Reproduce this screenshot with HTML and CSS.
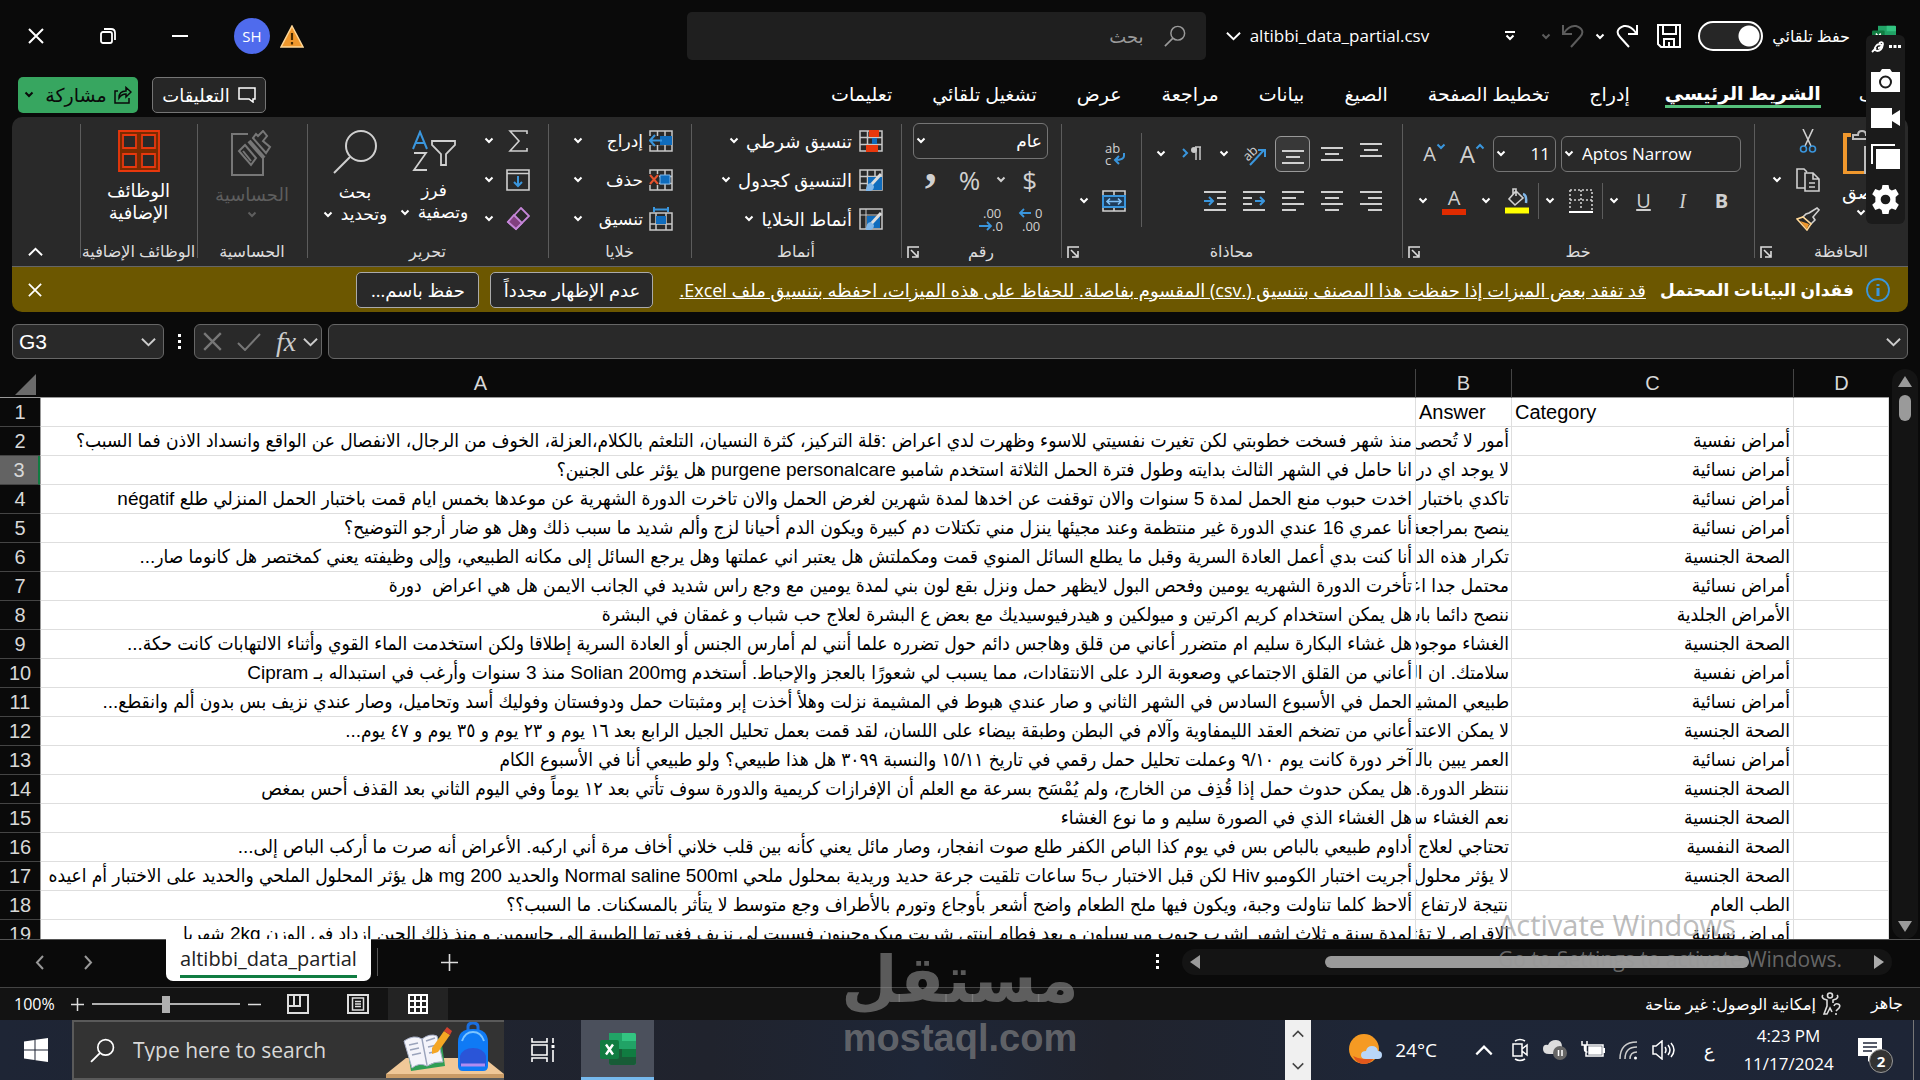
FILE: index.html
```html
<!DOCTYPE html>
<html lang="ar">
  <head>
    <meta charset="UTF-8" />
    <meta name="viewport" content="width=device-width, initial-scale=1.0" />
    <title>altibbi_data_partial.csv - Excel</title>
    <link rel="stylesheet" href="styles.css">
  </head>
  <body>
    <!-- shared symbols -->
    <svg class="defs" width="0" height="0">
      <symbol id="chev" viewBox="0 0 10 7"><path d="M1.5 1.5 5 5l3.500-3.500" fill="none" stroke="currentColor" stroke-width="2" /></symbol>
      <symbol id="chev-big" viewBox="0 0 16 10"><path d="M1 1.500 8 8.500l7-7" fill="none" stroke="currentColor" stroke-width="2" /></symbol>
      <symbol id="close" viewBox="0 0 16 16"><path d="M1 1l14 14M15 1 1 15" fill="none" stroke="currentColor" stroke-width="2" /></symbol>
      <symbol id="search" viewBox="0 0 24 24"><circle cx="15" cy="9" r="7.500" fill="none" stroke="currentColor" stroke-width="1.600" /><path d="M9.500 14.500 1 23" stroke="currentColor" stroke-width="1.800" /></symbol>
      <symbol id="launcher" viewBox="0 0 12 12"><path d="M1 12V1h11M4 4l6 6M11 5v6H5" fill="none" stroke="currentColor" stroke-width="1.600" /></symbol>
      <symbol id="excel" viewBox="0 0 36 34">
        <path d="M9 1h25q2 0 2 2v28q0 2-2 2H11q-2 0-2-2z" fill="#21a366" />
        <path d="M22 1h12q2 0 2 2v6H22z" fill="#33c481" /><path d="M9 17h13v16H11q-2 0-2-2z" fill="#185c37" /><path d="M22 17h14v8H22z" fill="#107c41" /><path d="M22 25h14v6q0 2-2 2H22z" fill="#185c37" />
        <rect y="8" width="19" height="19" rx="2" fill="#107c41" /><path d="M6 12.500l7 10M13 12.500l-7 10" stroke="#fff" stroke-width="2.400" />
      </symbol>
      <symbol id="table" viewBox="0 0 24 22"><path d="M1 1h22v20H1zM1 7.500h22M1 14.500h22M8.500 1v20M16 1v20" fill="none" stroke="#c8c8c8" stroke-width="1.500" /></symbol>
    </svg>

    <header class="titlebar" dir="rtl">
      <svg class="app-icon" viewBox="0 0 36 34"><use href="#excel" /></svg>
      <label class="autosave">حفظ تلقائي <input type="checkbox" role="switch" /></label>
      <div class="qat">
        <button aria-label="Save"><svg width="24" height="24" viewBox="0 0 24 24" fill="none" stroke="#fff" stroke-width="2"><path d="M1 1h22v22H4l-3-3zM6 1v9h13V1M7 23v-8h10v8M12 18v5" /></svg></button>
        <button aria-label="Redo"><svg width="22" height="24" viewBox="0 0 22 24" fill="none" stroke="#fff" stroke-width="2"><path d="M21 1v9h-9M20 9Q15 1 8 2C1 4 0 9 4 13l9 10" /></svg></button>
        <button aria-label="Redo list"><svg class="chev"><use href="#chev" /></svg></button>
        <button class="dim" aria-label="Undo"><svg width="22" height="24" viewBox="0 0 22 24" fill="none" stroke="#5c5c5c" stroke-width="2"><path d="M1 1v9h9M2 9Q7 1 14 2c7 2 8 7 4 11L9 23" /></svg></button>
        <button class="dim" aria-label="Undo list"><svg class="chev"><use href="#chev" /></svg></button>
        <button class="custom" aria-label="Customize"><svg width="12" height="10" viewBox="0 0 12 10" fill="none" stroke="#fff" stroke-width="2"><path d="M1 1h10M2.500 4.500 6 8l3.500-3.500" /></svg></button>
      </div>
      <button class="filename" dir="ltr"><svg width="15" height="10"><use href="#chev-big" /></svg>altibbi_data_partial.csv</button>
      <label class="search">
        <svg width="22" height="22"><use href="#search" /></svg>
        <input type="text" placeholder="بحث" aria-label="بحث" />
      </label>
      <div class="account">
        <svg width="24" height="23" viewBox="0 0 24 23"><path d="M12 1 23 22H1z" fill="#f0982d" stroke="#ffd796" stroke-width="1.500" /><path d="M12 8v7M12 17v2.500" stroke="#4b2c00" stroke-width="2.200" /></svg>
        <span class="avatar">SH</span>
      </div>
      <div class="window-buttons">
        <button aria-label="Minimize"><svg width="16" height="16" stroke="#fff" stroke-width="2"><path d="M0 8h16" /></svg></button>
        <button aria-label="Restore"><svg width="16" height="16" fill="none" stroke="#fff" stroke-width="1.800"><rect x="1" y="4" width="11" height="11" rx="2" /><path d="M4 1h7q4 0 4 4v7" /></svg></button>
        <button aria-label="Close"><svg width="16" height="16"><use href="#close" /></svg></button>
      </div>
    </header>

    <nav class="tabs" dir="rtl">
      <a href="#">ملف</a>
      <a href="#" class="active">الشريط الرئيسي</a>
      <a href="#">إدراج</a>
      <a href="#">تخطيط الصفحة</a>
      <a href="#">الصيغ</a>
      <a href="#">بيانات</a>
      <a href="#">مراجعة</a>
      <a href="#">عرض</a>
      <a href="#">تشغيل تلقائي</a>
      <a href="#">تعليمات</a>
      <button class="comments"><svg width="18" height="16" viewBox="0 0 18 16" fill="none" stroke="#fff" stroke-width="1.500"><path d="M1 1h16v11h-2v3l-4-3H1z" /></svg>التعليقات</button>
      <button class="share"><svg width="18" height="18" viewBox="0 0 18 18" fill="none" stroke="#0a0a0a" stroke-width="1.500"><path d="M4 5H1v12h14v-5M5 12c0-5 3-7 7-7V1.500L17 6l-5 5V8c-3 0-5 1-7 4z" /></svg>مشاركة<svg class="chev"><use href="#chev" /></svg></button>
    </nav>

    <section class="ribbon" dir="rtl">
      <div class="group clipboard">
        <div class="body">
          <button class="big"><svg width="48" height="44" viewBox="0 0 48 44" fill="none" stroke-width="2"><path d="M14 5H8v38h19M36 5h6v8" stroke="#f0982d" stroke-width="4" /><path d="M16 9V5h5q0-4 4-4t4 4h5v4zM28 17h14v26H28z" stroke="#bdbdbd" fill="#292929" /></svg><span>لصق</span><svg class="chev"><use href="#chev" /></svg></button>
          <div class="rows">
            <div class="row"><button aria-label="Cut"><svg width="24" height="24" viewBox="0 0 24 24" fill="none" stroke-width="1.600"><path d="M7 0l8 17M17 0 9 17" stroke="#d0d0d0" /><circle cx="7.500" cy="20" r="3" stroke="#3a96dd" /><circle cx="16.500" cy="20" r="3" stroke="#3a96dd" /></svg></button></div>
            <div class="row"><button aria-label="Copy"><svg width="24" height="24" viewBox="0 0 24 24" fill="none" stroke="#d0d0d0" stroke-width="1.600"><path d="M9 20H1V1h7l3 3M9 5h8l6 6v12H9zM17 5v6h6M13 15h6M13 19h6" /></svg></button><button aria-label="Copy options"><svg class="chev"><use href="#chev" /></svg></button></div>
            <div class="row"><button aria-label="Format painter"><svg width="24" height="24" viewBox="0 0 24 24" fill="none" stroke="#d0d0d0" stroke-width="1.600"><path d="M13 6l8-5 2 2-6 7 2 3-4 4-8-7 3-3z" /><path d="M7 10l8 7-4 6L1 12z" fill="#292929" stroke="#ffd796" /><path d="M4 14l9 3-2 5z" fill="#f0982d" stroke="none" /></svg></button></div>
          </div>
        </div>
        <div class="caption"><span>الحافظة</span><svg class="launcher"><use href="#launcher" /></svg></div>
      </div>

      <div class="group font">
        <div class="body two">
          <div class="row">
            <div class="combo name"><select dir="ltr" aria-label="Font"><option>Aptos Narrow</option></select><svg class="chev"><use href="#chev" /></svg></div>
            <div class="combo size"><select aria-label="Font size"><option>11</option></select><svg class="chev"><use href="#chev" /></svg></div>
            <button class="grow" aria-label="Increase font size">A<svg class="chev up"><use href="#chev" /></svg></button>
            <button class="shrink" aria-label="Decrease font size">A<svg class="chev"><use href="#chev" /></svg></button>
          </div>
          <div class="row">
            <button class="cell"><b>B</b></button>
            <button class="cell"><i>I</i></button>
            <button class="cell"><u>U</u></button>
            <button class="drop" aria-label="Underline options"><svg class="chev"><use href="#chev" /></svg></button>
            <span class="vline"></span>
            <button class="cell wide" aria-label="Borders"><svg width="24" height="24" viewBox="0 0 24 24" fill="none" stroke="#d0d0d0" stroke-width="1.600"><path d="M1 1h22v20M1 1v20M12 1v20M1 11h22" stroke-dasharray="2 2" /><path d="M0 23h24" stroke="#fff" stroke-width="2" /></svg></button>
            <button class="drop" aria-label="Border options"><svg class="chev"><use href="#chev" /></svg></button>
            <span class="vline"></span>
            <button class="cell wide" aria-label="Fill color"><svg width="24" height="26" viewBox="0 0 24 26" fill="none" stroke="#d0d0d0" stroke-width="1.600"><path d="M11 3l7 7-8 7-6-6zM11 8V1H8v5" /><path d="M18 6q4 1 3 9" stroke="#7fb6e8" stroke-width="2.500" /><path d="M0 22.500h24" stroke="#ff0" stroke-width="6" /></svg></button>
            <button class="drop" aria-label="Fill options"><svg class="chev"><use href="#chev" /></svg></button>
            <button class="cell wide font-color" aria-label="Font color">A</button>
            <button class="drop" aria-label="Font color options"><svg class="chev"><use href="#chev" /></svg></button>
          </div>
        </div>
        <div class="caption"><span>خط</span><svg class="launcher"><use href="#launcher" /></svg></div>
      </div>

      <div class="group align">
        <div class="body">
          <div class="two">
            <div class="row">
              <button class="cell" aria-label="Top align"><svg class="lines up4"><path d="M0 1h22M4 7h14M0 13h22" /></svg></button>
              <button class="cell" aria-label="Middle align"><svg class="lines"><path d="M0 1h22M4 7h14M0 13h22" /></svg></button>
              <button class="cell pressed" aria-label="Bottom align"><svg class="lines"><path d="M0 1h22M4 7h14M0 13h22" /></svg></button>
              <button class="cell" aria-label="Orientation"><svg width="24" height="24" viewBox="0 0 24 24" fill="none" stroke-width="1.600"><text x="1" y="16" transform="rotate(-45 8 12)">ab</text><path d="M8 23 22 8M16 8h7v7" stroke="#3a96dd" stroke-width="2" /></svg></button>
              <button class="drop" aria-label="Orientation options"><svg class="chev"><use href="#chev" /></svg></button>
              <button class="cell wide" aria-label="Text direction"><svg width="20" height="16" viewBox="0 0 20 16" fill="none" stroke-width="2"><path d="M1 3l4 4-4 4" stroke="#3a96dd" /><path d="M19 1h-6M14 1v13M18 1v13" stroke="#c8c8c8" stroke-width="1.500" /><circle cx="12" cy="4" r="3" fill="#c8c8c8" /></svg></button>
              <button class="drop" aria-label="Direction options"><svg class="chev"><use href="#chev" /></svg></button>
            </div>
            <div class="row">
              <button class="cell" aria-label="Align right"><svg class="lines tall"><path d="M0 1h22M8 7h14M0 13h22M8 19h14" /></svg></button>
              <button class="cell" aria-label="Center"><svg class="lines tall"><path d="M0 1h22M4 7h14M0 13h22M4 19h14" /></svg></button>
              <button class="cell" aria-label="Align left"><svg class="lines tall"><path d="M0 1h22M0 7h14M0 13h22M0 19h14" /></svg></button>
              <button class="cell" aria-label="Decrease indent"><svg class="lines tall"><path d="M0 1h22M0 7h9M0 13h9M0 19h22" /><path class="blue" d="M12 10h9M17 6l4 4-4 4" /></svg></button>
              <button class="cell" aria-label="Increase indent"><svg class="lines tall"><path d="M0 1h22M13 7h9M13 13h9M0 19h22" /><path class="blue" d="M0 10h9M5 6l4 4-4 4" /></svg></button>
            </div>
          </div>
          <span class="vline long"></span>
          <div class="two">
            <div class="row"><button class="cell" aria-label="Wrap text"><svg width="24" height="26" viewBox="0 0 24 26" fill="none"><text x="3" y="12">ab</text><text x="3" y="24">c</text><path d="M22 12v3q0 4-9 4M17 15l-4 4 4 4" stroke="#3a96dd" stroke-width="2" /></svg></button></div>
            <div class="row"><button class="cell" aria-label="Merge"><svg width="24" height="22" viewBox="0 0 24 22" fill="none" stroke-width="1.600"><path d="M1 1h22v20H1zM12 1v20" stroke="#d0d0d0" /><path d="M1 6h22v11H1z" fill="#1e3c5a" stroke="#3a96dd" stroke-width="2" /><path d="M5 11.500h14M8 8.500l-3 3 3 3M16 8.500l3 3-3 3" stroke="#7fc0f5" /></svg></button><button class="drop" aria-label="Merge options"><svg class="chev"><use href="#chev" /></svg></button></div>
          </div>
        </div>
        <div class="caption"><span>محاذاة</span><svg class="launcher"><use href="#launcher" /></svg></div>
      </div>

      <div class="group number">
        <div class="body rows">
          <div class="row"><div class="combo format"><select aria-label="Number format"><option>عام</option></select><svg class="chev"><use href="#chev" /></svg></div></div>
          <div class="row signs"><button>$</button><button aria-label="Currency options"><svg class="chev"><use href="#chev" /></svg></button><button>%</button><button class="comma" aria-label="Comma style">,</button></div>
          <div class="row decimals">
            <button aria-label="Increase decimal"><svg width="26" height="26" viewBox="0 0 26 26" fill="none"><text x="17" y="12">0</text><text x="4" y="25">.00</text><path d="M2 7h11M6 3 2 7l4 4" stroke="#3a96dd" stroke-width="1.800" /></svg></button>
            <button aria-label="Decrease decimal"><svg width="26" height="26" viewBox="0 0 26 26" fill="none"><text x="4" y="12">.00</text><text x="13" y="25">.0</text><path d="M0 20h12M8 16l4 4-4 4" stroke="#3a96dd" stroke-width="1.800" /></svg></button>
          </div>
        </div>
        <div class="caption"><span>رقم</span><svg class="launcher"><use href="#launcher" /></svg></div>
      </div>

      <div class="group styles">
        <div class="body rows">
          <button class="row item"><svg width="24" height="22" viewBox="0 0 24 22"><use href="#table" /><path d="M10 0h10v7H10zM7 15h12v7H7z" fill="#e8380d" /><path d="M13 8h5v6h-5z" fill="#0f6cbd" /></svg>تنسيق شرطي<svg class="chev"><use href="#chev" /></svg></button>
          <button class="row item"><svg width="24" height="22" viewBox="0 0 24 22"><use href="#table" /><path d="M9 8h14v13H9z" fill="#0f6cbd" /><path d="M22 5 12 16" stroke="#ddd" stroke-width="3" /><path d="M12 14q-5 0-5 8 8 1 8-5z" fill="#7fb6e8" /></svg>التنسيق كجدول<svg class="chev"><use href="#chev" /></svg></button>
          <button class="row item"><svg width="24" height="22" viewBox="0 0 24 22"><path d="M1 1h22v20H1z" fill="none" stroke="#c8c8c8" stroke-width="1.500" /><path d="M1 7h22M7 1v20" stroke="#c8c8c8" /><path d="M8 8h13v12H8z" fill="#0f6cbd" /><path d="M22 5 12 16" stroke="#ddd" stroke-width="3" /><path d="M12 14q-5 0-5 8 8 1 8-5z" fill="#7fb6e8" /></svg>أنماط الخلايا<svg class="chev"><use href="#chev" /></svg></button>
        </div>
        <div class="caption"><span>أنماط</span></div>
      </div>

      <div class="group cells">
        <div class="body rows">
          <button class="row item"><svg width="24" height="22" viewBox="0 0 24 22"><use href="#table" /><path d="M10 6h13v9H10z" fill="#0f6cbd" /><path d="M0 6h11v9H0z" fill="#292929" /><path d="M1 10.500h12M6 5l-5 5.500L6 16" fill="none" stroke="#3a96dd" stroke-width="2" /></svg><span>إدراج</span><svg class="chev"><use href="#chev" /></svg></button>
          <button class="row item"><svg width="24" height="22" viewBox="0 0 24 22"><use href="#table" /><path d="M0 5h10v11H0z" fill="#292929" /><path d="M11 6h10v9H11z" fill="#0f6cbd" stroke="#7fb6e8" /><path d="M1 6l8 9M9 6l-8 9" stroke="#e8532d" stroke-width="2" /></svg><span>حذف</span><svg class="chev"><use href="#chev" /></svg></button>
          <button class="row item"><svg width="24" height="24" viewBox="0 0 24 24"><path d="M1 6h22v17H1zM1 17h22M7 6v17M17 6v17" fill="none" stroke="#c8c8c8" stroke-width="1.500" /><path d="M7 9h10v8H7z" fill="#0f6cbd" /><path d="M5 0v5M19 0v5M5 2.500h14" stroke="#3a96dd" stroke-width="2" /></svg><span>تنسيق</span><svg class="chev"><use href="#chev" /></svg></button>
        </div>
        <div class="caption"><span>خلايا</span></div>
      </div>

      <div class="group editing">
        <div class="body">
          <div class="rows">
            <div class="row"><button aria-label="Sum"><svg width="24" height="22" viewBox="0 0 24 22" fill="none" stroke="#d0d0d0" stroke-width="1.600"><path d="M21 4V1H4l9 10-9 10h17v-3" /></svg></button><button aria-label="Sum options"><svg class="chev"><use href="#chev" /></svg></button></div>
            <div class="row"><button aria-label="Fill"><svg width="24" height="22" viewBox="0 0 24 22" fill="none" stroke="#d0d0d0" stroke-width="1.600"><path d="M1 1h22v20H1zM1 4.500h22" /><path d="M12 7v10M8 13l4 4 4-4" stroke="#3a96dd" stroke-width="2" /></svg></button><button aria-label="Fill options"><svg class="chev"><use href="#chev" /></svg></button></div>
            <div class="row"><button aria-label="Clear"><svg width="24" height="24" viewBox="0 0 24 24" fill="none" stroke="#c586d8" stroke-width="1.800"><path d="M15 1l8 8L10 22l-8-7z" /><path d="M8 8l8 8-6 6-8-7z" fill="#81407f" /></svg></button><button aria-label="Clear options"><svg class="chev"><use href="#chev" /></svg></button></div>
          </div>
          <button class="big"><svg width="44" height="42" viewBox="0 0 44 42" fill="none" stroke="#d0d0d0" stroke-width="1.800"><path d="M1 19 8 2l7 17M4 13h8" stroke="#3a96dd" stroke-width="2" /><path d="M2 23h12L2 40h13M20 11h23v4l-9 9v11h-5V24l-9-9z" /></svg><span>فرز</span><span>وتصفية<svg class="chev"><use href="#chev" /></svg></span></button>
          <button class="big"><svg width="44" height="44" viewBox="0 0 44 44" fill="none" stroke="#d0d0d0" stroke-width="2"><circle cx="28" cy="16" r="15" /><path d="M17 27 1 43" /></svg><span>بحث</span><span>وتحديد<svg class="chev"><use href="#chev" /></svg></span></button>
        </div>
        <div class="caption"><span>تحرير</span></div>
      </div>

      <div class="group single">
        <div class="body">
          <button class="big" disabled><svg width="42" height="46" viewBox="0 0 42 46" fill="none" stroke="#777" stroke-width="2"><path d="M17 4H1v41h31V27" /><path d="M14 15l11 13-5 7L8 21z" /><path d="M12 21l8 10" /><path d="M18 11l15 17" stroke-width="4" /><path d="M22 8l13 15 4-6-7-6 4-5-4-5-5 5-2-2z" /></svg><span>الحساسية</span><svg class="chev"><use href="#chev" /></svg></button>
        </div>
        <div class="caption"><span>الحساسية</span></div>
      </div>

      <div class="group single">
        <div class="body">
          <button class="big"><svg width="42" height="42" viewBox="0 0 42 42" fill="none"><path d="M2 2h38v38H2zM21 2v38M2 21h38" stroke="#7a2b00" stroke-width="4" /><path d="M1 1h40v40H1zM5 5h13v13H5zM24 5h13v13H24zM5 24h13v13H5zM24 24h13v13H24z" stroke="#e8380d" stroke-width="1.800" /></svg><span>الوظائف</span><span>الإضافية</span></button>
        </div>
        <div class="caption"><span>الوظائف الإضافية</span></div>
      </div>

      <div class="group collapse">
        <button aria-label="Collapse ribbon"><svg class="up" width="15" height="10"><use href="#chev-big" /></svg></button>
      </div>
    </section>

    <section class="message" dir="rtl">
      <svg width="24" height="24" viewBox="0 0 24 24" fill="none" stroke="#3a96dd" stroke-width="1.800"><circle cx="12" cy="12" r="11" /><path d="M12 6v2M12 10v8" stroke-width="3" /></svg>
      <strong>فقدان البيانات المحتمل</strong>
      <a href="#">قد تفقد بعض الميزات إذا حفظت هذا المصنف بتنسيق (<bdi dir="rtl">.csv</bdi>) المقسوم بفاصلة. للحفاظ على هذه الميزات، احفظه بتنسيق ملف Excel.</a>
      <button class="again">عدم الإظهار مجدداً</button>
      <button class="saveas">حفظ باسم...</button>
      <button class="dismiss" aria-label="Close message"><svg width="14" height="14"><use href="#close" /></svg></button>
    </section>

    <section class="formula">
      <div class="namebox"><input type="text" value="G3" aria-label="Name box" /><svg width="15" height="10"><use href="#chev-big" /></svg></div>
      <span class="dots"></span>
      <div class="fx">
        <svg width="19" height="19" class="off"><use href="#close" /></svg>
        <svg width="24" height="18" viewBox="0 0 24 18" fill="none" stroke="#777" stroke-width="2"><path d="M1 10l7 7L23 1" /></svg>
        <i>fx</i>
        <svg width="15" height="10"><use href="#chev-big" /></svg>
      </div>
      <div class="entry"><input type="text" aria-label="Formula bar" /><svg width="15" height="10"><use href="#chev-big" /></svg></div>
    </section>

    <main class="sheet">
      <div class="grid">
        <table>
          <colgroup><col class="n"><col class="a"><col class="b"><col class="c"><col class="d"></colgroup>
          <thead>
            <tr><th class="corner"><svg width="21" height="21"><path d="M21 0v21H0z" fill="#6b6b6b" /></svg></th><th class="head-a">A</th><th>B</th><th>C</th><th>D</th></tr>
          </thead>
          <tbody>
            <tr><th>1</th><td></td><td class="ltr">Answer</td><td class="ltr">Category</td><td></td></tr>
            <tr><th>2</th><td>منذ شهر فسخت خطوبتي لكن تغيرت نفسيتي للاسوء وظهرت لدي اعراض :قلة التركيز، كثرة النسيان، التلعثم بالكلام،العزلة، الخوف من الرجال، الانفصال عن الواقع وانسداد الاذن فما السبب؟</td><td>أمور لا تُحصى</td><td>أمراض نفسية</td><td></td></tr>
            <tr class="selected"><th>3</th><td>انا حامل في الشهر الثالث بدايته وطول فترة الحمل الثلاثة استخدم شامبو purgene personalcare هل يؤثر على الجنين؟</td><td>لا يوجد اي دراسة</td><td>أمراض نسائية</td><td></td></tr>
            <tr><th>4</th><td>اخدت حبوب منع الحمل لمدة 5 سنوات والان توقفت عن اخدها لمدة شهرين لغرض الحمل والان تاخرت الدورة الشهرية عن موعدها بخمس ايام قمت باختبار الحمل المنزلي طلع négatif</td><td>تاكدي باختبار</td><td>أمراض نسائية</td><td></td></tr>
            <tr><th>5</th><td>أنا عمري 16 عندي الدورة غير منتظمة وعند مجيئها ينزل مني تكتلات دم كبيرة ويكون الدم أحيانا لزج وألم شديد ما سبب ذلك وهل هو ضار أرجو التوضيح؟</td><td>ينصح بمراجعة</td><td>أمراض نسائية</td><td></td></tr>
            <tr><th>6</th><td>أنا كنت بدي أعمل العادة السرية وقبل ما يطلع السائل المنوي قمت ومكملتش هل يعتبر اني عملتها وهل يرجع السائل إلى مكانه الطبيعي، وإلى وظيفته يعني كمختصر هل كانوما صار...</td><td>تكرار هذه الدورة</td><td>الصحة الجنسية</td><td></td></tr>
            <tr><th>7</th><td>تأخرت الدورة الشهريه يومين وفحص البول لايظهر حمل ونزل بقع لون بني لمدة يومين مع وجع راس شديد في الجانب الايمن هل هي اعراض&nbsp; دورة</td><td>محتمل جدا اعراض</td><td>أمراض نسائية</td><td></td></tr>
            <tr><th>8</th><td>هل يمكن استخدام كريم اكرتين و ميولكين و هيدرفيوسيديك مع بعض ع البشرة لعلاج حب شباب و غمقان في البشرة</td><td>ننصح دائما باستشارة</td><td>الأمراض الجلدية</td><td></td></tr>
            <tr><th>9</th><td>هل غشاء البكارة سليم ام متضرر أعاني من قلق وهاجس دائم حول تضرره علما أنني لم أمارس الجنس أو العادة السرية إطلاقا ولكن استخدمت الماء القوي وأثناء الالتهابات كانت حكة...</td><td>الغشاء موجود</td><td>الصحة الجنسية</td><td></td></tr>
            <tr><th>10</th><td>أعاني من القلق الاجتماعي وصعوبة الرد على الانتقادات، مما يسبب لي شعورًا بالعجز والإحباط. أستخدم Solian 200mg منذ 3 سنوات وأرغب في استبداله بـ Cipram</td><td>سلامتك. ان القلق</td><td>أمراض نفسية</td><td></td></tr>
            <tr><th>11</th><td>الحمل في الأسبوع السادس في الشهر الثاني و صار عندي هبوط في المشيمة نزلت وهلأ أخذت إبر ومثبتات حمل ودوفستان وفوليك أسد وتحاميل، وصار عندي نزيف بس بدون ألم وانقطع...</td><td>طبيعي المشيمة</td><td>أمراض نسائية</td><td></td></tr>
            <tr><th>12</th><td>أعاني من تضخم العقد الليمفاوية وآلام في البطن وطبقة بيضاء على اللسان، لقد قمت بعمل تحليل الجيل الرابع بعد ١٦ يوم و ٢٣ يوم و ٣٥ يوم و ٤٧ يوم...</td><td>لا يمكن الاعتماد</td><td>الصحة الجنسية</td><td></td></tr>
            <tr><th>13</th><td>آخر دورة كانت يوم ٩/١٠ وعملت تحليل حمل رقمي في تاريخ ١٥/١١ والنسبة ٣٠٩٩ هل هذا طبيعي؟ ولو طبيعي أنا في الأسبوع الكام</td><td>العمر يبين بالسونار</td><td>أمراض نسائية</td><td></td></tr>
            <tr><th>14</th><td>هل يمكن حدوث حمل إذا قُذِف من الخارج، ولم يُمْسَح بسرعة مع العلم أن الإفرازات كريمية والدورة سوف تأتي بعد ١٢ يوماً وفي اليوم الثاني بعد القذف أحس بمغص</td><td>ننتظر الدورة.</td><td>الصحة الجنسية</td><td></td></tr>
            <tr><th>15</th><td>هل الغشاء الذي في الصورة سليم و ما نوع الغشاء</td><td>نعم الغشاء سليم</td><td>الصحة الجنسية</td><td></td></tr>
            <tr><th>16</th><td>أداوم طبيعي بالباص بس في يوم كذا الباص الكفر طلع صوت انفجار، وصار مائل يعني كأنه بين قلب خلاني أخاف مرة أني اركبه. الأعراض أنه صرت ما أركب الباص إلى...</td><td>تحتاجي لعلاج</td><td>الصحة النفسية</td><td></td></tr>
            <tr><th>17</th><td>أجريت اختبار الكومبو Hiv لكن قبل الاختبار ب5 ساعات تلقيت جرعة حديد وريدية بمحلول ملحي Normal saline 500ml والحديد 200 mg هل يؤثر المحلول الملحي والحديد على الاختبار أم اعيده</td><td>لا يؤثر محلول</td><td>الصحة الجنسية</td><td></td></tr>
            <tr><th>18</th><td>ألاحظ كلما تناولت وجبة، ويكون فيها ملح الطعام واضح أشعر بأوجاع وتورم بالأطراف وجع متوسط لا يتأثر بالمسكنات. ما السبب؟؟</td><td>نتيجة لارتفاع</td><td>الطب العام</td><td></td></tr>
            <tr><th>19</th><td>لمدة سنة و ثلاث اشهر اشرب حبوب ميرسيلون و بعد فطام ابنتي شربت ميكروجينون فسببت لي نزيف فغيرتها الطبيبة الى جاسمين و منذ ذلك الحين ازداد في الوزن 2kg شهريا</td><td>الاقراص لا تؤثر</td><td>أمراض نسائية</td><td></td></tr>
          </tbody>
        </table>
      </div>
      <div class="vscroll">
        <svg width="14" height="11"><path d="M7 0l7 11H0z" fill="#9a9a9a" /></svg>
        <span class="thumb"></span>
        <svg class="down" width="14" height="11"><path d="M0 0h14L7 11z" fill="#9a9a9a" /></svg>
      </div>
    </main>

    <section class="sheetbar">
      <button class="prev" aria-label="Previous sheet"><svg width="9" height="15" viewBox="0 0 9 15" fill="none" stroke="#999" stroke-width="2"><path d="M8 1 2 7.500 8 14" /></svg></button>
      <button class="next" aria-label="Next sheet"><svg width="9" height="15" viewBox="0 0 9 15" fill="none" stroke="#999" stroke-width="2"><path d="M1 1l6 6.500L1 14" /></svg></button>
      <button class="sheet-tab"><span>altibbi_data_partial</span></button>
      <button class="add" aria-label="New sheet"><svg width="17" height="17" stroke="#ddd" stroke-width="1.600"><path d="M8.500 0v17M0 8.500h17" /></svg></button>
      <span class="dots"></span>
      <div class="hscroll">
        <svg width="10" height="14"><path d="M10 0v14L0 7z" fill="#9a9a9a" /></svg>
        <div class="track"><span class="thumb"></span></div>
        <svg width="10" height="14"><path d="M0 0v14l10-7z" fill="#ababab" /></svg>
      </div>
    </section>

    <footer class="status">
      <span class="percent">100%</span>
      <svg width="13" height="13" stroke="#ddd" stroke-width="1.500"><path d="M6.500 0v13M0 6.500h13" /></svg>
      <input type="range" min="10" max="190" value="100" aria-label="Zoom" />
      <svg width="13" height="13" stroke="#ddd" stroke-width="1.500"><path d="M0 6.500h13" /></svg>
      <div class="views">
        <button aria-label="Page break preview"><svg width="22" height="20" viewBox="0 0 22 20" fill="none" stroke="#ddd" stroke-width="2"><path d="M1 1h20v18H1zM1 12h12V1M7 1v11" /></svg></button>
        <button aria-label="Page layout"><svg width="22" height="20" viewBox="0 0 22 20" fill="none" stroke="#ddd" stroke-width="2"><path d="M1 1h20v18H1z" /><path d="M5.500 4h11v12h-11zM8 7.500h6M8 10h6M8 12.500h6" stroke-width="1.500" /></svg></button>
        <button class="on" aria-label="Normal"><svg width="20" height="20" viewBox="0 0 20 20" fill="none" stroke="#fff" stroke-width="2"><path d="M1 1h18v18H1zM1 7h18M1 13h18M7 1v18M13 1v18" /></svg></button>
      </div>
      <div class="access" dir="rtl">
        <span>جاهز</span>
        <button><svg width="21" height="24" viewBox="0 0 21 24" fill="none" stroke="#ddd" stroke-width="1.600"><circle cx="9" cy="3.500" r="2.500" /><path d="M2 3q-2 2 1 4l3 1v6L3 22h3l3-6 2 4M16 3q2 2-1 4l-3 1v3M13 14q1-3 4-2 3 1 1 4l-3 3M15 21v2" /></svg>إمكانية الوصول: غير متاحة</button>
      </div>
    </footer>

    <footer class="taskbar">
      <button class="start" aria-label="Start"><svg width="24" height="24" fill="#fff"><path d="M0 3.500 10.500 2v9.500H0zM11.500 1.800 24 0v11.500H11.500zM0 12.500h10.500V22L0 20.500zM11.500 12.500H24V24l-12.500-1.800z" /></svg></button>
      <label class="task-search">
        <svg width="25" height="25"><use href="#search" /></svg>
        <input type="text" placeholder="Type here to search" aria-label="Search Windows" />
        <svg width="118" height="56" viewBox="0 0 118 56">
          <path d="M20 36h78l20 16v4H0v-4z" fill="#f0c898" /><path d="M0 52h118v4H0z" fill="#c99b66" />
          <path d="M20 20l35-4 4 28-34 5z" fill="#2f9e54" /><path d="M18 19q10-7 18-2 8-6 15-3l6 26q-8-1-16 4-8-4-15 2z" fill="#f4f4fa" stroke="#a8b0c8" /><path d="M36 17l5 26M23 23l9-2M24 28l9-2M26 33l9-2M40 19l9-3M42 25l9-2M43 31l9-2" stroke="#9aa3bb" stroke-width="1.400" />
          <path d="M46 26 58 9l6 4-12 17-6 2z" fill="#f5a623" /><path d="M58 9l3-4 5 4-2 4z" fill="#d3412e" />
          <path d="M82 10V5q0-4 5-4t5 4v5" fill="none" stroke="#1a6fe0" stroke-width="3" /><path d="M72 44V20Q72 7 87 7t15 13v24q0 5-5 5H77q-5 0-5-5z" fill="#0f7af5" /><path d="M76 19q3-9 11-9t11 9" fill="none" stroke="#7cc4ff" stroke-width="2" /><path d="M74 44V34q3-8 13-8t13 8v10z" fill="#2a55d8" /><path d="M75 43h24" stroke="#b08cf0" stroke-width="3" />
        </svg>
      </label>
      <button class="taskview" aria-label="Task view"><svg width="24" height="24" viewBox="0 0 24 24" fill="none" stroke="#fff" stroke-width="1.600"><path d="M1 0v4h15V0M1 7h15v10H1zM1 24v-4h15v4M22 0v5M22 12v12" /><path d="M22 7v3" stroke-width="3" /></svg></button>
      <button class="excel-task" aria-label="Excel"><svg width="36" height="34"><use href="#excel" /></svg></button>
      <div class="pager"><svg class="up" width="12" height="8"><use href="#chev-big" /></svg><svg width="12" height="8"><use href="#chev-big" /></svg></div>
      <div class="weather"><svg width="34" height="32" viewBox="0 0 34 32"><circle cx="15" cy="15" r="15" fill="#f59a23" /><path d="M4 22q11 6 22 0-4 8-11 8T4 22z" fill="#e2571c" /><path d="M17 25q-5 0-5-4t5-4q1-5 6-5t6 5q4 0 4 4t-4 4z" fill="#b9d6f7" /></svg>24°C</div>
      <div class="tray">
        <svg class="up" width="18" height="11"><use href="#chev-big" /></svg>
        <svg width="18" height="24" viewBox="0 0 18 24" fill="none" stroke="#fff" stroke-width="1.500"><path d="M4 3q5-3 10 0M4 21q5 3 10 0M2 6h9v12H2zM11 11l5-4v10l-5-4" /></svg>
        <svg width="24" height="20" viewBox="0 0 24 20"><path d="M6 14q-6 0-6-5t5-4q2-5 8-5t6 7v7z" fill="#ddd" /><circle cx="17" cy="13" r="7" fill="#666" /><path d="M15.500 10v6M19 10v6" stroke="#fff" stroke-width="1.500" /></svg>
        <svg width="24" height="18" viewBox="0 0 24 18" fill="none" stroke="#fff" stroke-width="1.500"><path d="M5 4h17v11H5zM1 0v4h5V0M3.500 4v4q0 3 3 3" /><path d="M8 6h12v7H8z" fill="#fff" /><path d="M23 7v5" stroke-width="2" /></svg>
        <svg width="19" height="19" viewBox="0 0 19 19" fill="none" stroke="#ccc" stroke-width="1.500"><path d="M1 18Q1 1 18 1M6 18Q6 6 18 6M11 18q0-7 7-7" /><circle cx="16.500" cy="17" r="1.500" fill="#fff" stroke="none" /></svg>
        <svg width="24" height="20" viewBox="0 0 24 20" fill="none" stroke="#fff" stroke-width="1.500"><path d="M1 6v8h3l6 5V1L4 6zM13 7q2 3 0 6M16 5q4 5 0 10M19 3q6 7 0 14" /></svg>
      </div>
      <span class="lang">ع</span>
      <div class="clock"><span>4:23 PM</span><span>11/17/2024</span></div>
      <button class="notify" aria-label="2 notifications"><svg width="24" height="24" viewBox="0 0 24 24"><path d="M0 0h24v18h-9l-5 6v-6H0z" fill="#fff" /><path d="M5 5h14M5 9h14M5 13h9" stroke="#20273a" stroke-width="1.400" /></svg><span class="badge">2</span></button>
      <button class="desktop" aria-label="Show desktop"></button>
    </footer>

    <aside class="capture">
      <svg width="30" height="12" viewBox="0 0 30 12" fill="none" stroke="#fff" stroke-width="1.800"><path d="M1 11l4-4M8 2q4-2 4 1-1 7-6 7-4-1-1-5 2-3 6-1-1 3-4 3" /><path d="M18 5.500h3M22.500 5.500h3M27 5.500h3" stroke-width="3" /></svg>
      <button aria-label="Screenshot"><svg width="29" height="23" fill="#fff"><path d="M0 3h9l2-3h8l2 3h8v20H0z" /><circle cx="14.500" cy="13" r="5.500" stroke="#1b1b1b" stroke-width="2" /></svg></button>
      <button aria-label="Record"><svg width="29" height="20" fill="#fff"><path d="M0 0h21v7l8-5v16l-8-5v7H0z" /></svg></button>
      <button aria-label="Gallery"><svg width="29" height="25" fill="#fff"><path d="M5 5h24v20H5zM0 0h24v2H2v18H0z" /></svg></button>
      <button aria-label="Settings"><svg width="29" height="29" viewBox="0 0 24 24" fill="#fff"><path fill-rule="evenodd" d="M9.500 0h5l.7 3.400 2 1.100L20.500 3.400l2.500 4.300-2.600 2.300v4l2.600 2.300-2.500 4.300-3.300-1.100-2 1.100-.7 3.400h-5l-.7-3.400-2-1.100-3.300 1.100L1 16.300 3.600 14v-4L1 7.700l2.500-4.300 3.300 1.100 2-1.100zM12 8a4 4 0 1 0 0 8 4 4 0 0 0 0-8z" /></svg></button>
    </aside>

    <div class="activate">
      <span>Activate Windows</span>
      <small>Go to Settings to activate Windows.</small>
    </div>

    <div class="brand">
      <span class="brand-ar">مستقل</span>
      <span class="brand-en">mostaql.com</span>
    </div>
  </body>
</html>
```
FILE: styles.css
```css
* {
  box-sizing: border-box;
}
body {
  margin: 0;
  height: 100vh;
  display: flex;
  flex-direction: column;
  overflow: hidden;
  position: relative;
  background-color: #0a0a0a;
  color: #fff;
  font-family: "Open Sans", "DejaVu Sans", sans-serif;
  font-size: 18px;
  line-height: 22px;
}
button,
input,
select {
  font: inherit;
  color: inherit;
  background: none;
  border: none;
  padding: 0;
  margin: 0;
  outline: none;
}
button {
  display: inline-flex;
  align-items: center;
  justify-content: center;
  white-space: nowrap;
}
a {
  color: inherit;
  text-decoration: none;
}
svg {
  display: block;
  flex: none;
}
.defs {
  position: absolute;
}
.chev {
  width: 10px;
  height: 7px;
}
.up {
  transform: rotate(180deg);
}

/* Title bar */
.titlebar {
  flex: none;
  height: 72px;
  display: flex;
  align-items: center;
  padding: 0 24px;
  font-size: 17px;
}
.app-icon {
  width: 24px;
  height: 23px;
}
.autosave {
  display: flex;
  align-items: center;
  gap: 9px;
  margin-right: 22px;
  font-size: 16px;
}
.autosave input {
  appearance: none;
  width: 65px;
  height: 30px;
  border: 2px solid #fff;
  border-radius: 15px;
  background: radial-gradient(circle at 49px 13px, #fff 10px, #262626 11px);
}
.qat {
  display: flex;
  align-items: center;
  gap: 11px;
  margin-right: 17px;
}
.qat button:first-child {
  margin-left: 8px;
}
.qat .dim {
  color: #5c5c5c;
}
.qat .custom {
  margin-right: 14px;
}
.filename {
  margin-right: 75px;
  gap: 9px;
}
.search {
  flex: none;
  width: 27vw;
  height: 48px;
  margin-right: 20px;
  padding-right: 20px;
  display: flex;
  align-items: center;
  gap: 20px;
  background-color: #1f1f1f;
  border-radius: 5px;
  color: #9a9a9a;
}
.search input {
  flex: 1;
  min-width: 0;
  font-size: 18px;
}
.search input::placeholder {
  color: #9a9a9a;
}
.account {
  display: flex;
  align-items: center;
  gap: 10px;
  margin-right: auto;
}
.avatar {
  width: 36px;
  height: 36px;
  border-radius: 50%;
  background-color: #4f6bed;
  font-size: 15px;
  line-height: 36px;
  text-align: center;
}
.window-buttons {
  display: flex;
  gap: 56px;
  margin-right: 46px;
  padding-left: 4px;
}

/* Ribbon tabs */
.tabs {
  flex: none;
  height: 45px;
  display: flex;
  align-items: center;
  gap: 40px;
  padding: 0 20px 0 18px;
  font-size: 19px;
}
.tabs a {
  white-space: nowrap;
  padding-bottom: 2px;
}
.tabs a:first-child {
  margin-right: 5px;
}
.tabs .active {
  font-weight: bold;
  border-bottom: 3px solid #56c17c;
  padding-bottom: 1px;
  margin: 0 -2px 0 -5px;
}
.comments,
.share {
  height: 36px;
  border-radius: 5px;
  font-size: 18px;
}
.comments {
  width: 114px;
  gap: 8px;
  margin-right: auto;
  background-color: #262626;
  border: 1px solid #757575;
}
.share {
  width: 120px;
  gap: 7px;
  margin-right: -26px;
  background-color: #37a660;
  color: #0a0a0a;
  font-size: 19px;
}
.share .chev {
  margin-right: 4px;
}

/* Ribbon */
.ribbon {
  flex: none;
  height: 150px;
  margin: 0 12px;
  display: grid;
  grid-template-columns: 154fr 352fr 341fr 160fr 210fr 143fr 241fr 110fr 117fr 68fr;
  background-color: #292929;
  border-radius: 10px 10px 0 0;
  border-bottom: 1px solid #666;
}
.group {
  position: relative;
  display: grid;
  grid-template-rows: 117px 26px;
  padding-top: 4px;
  min-width: 0;
  font-size: 17px;
}
.group::after {
  content: "";
  position: absolute;
  left: 0;
  top: 7px;
  bottom: 8px;
  width: 1px;
  background-color: #5c5c5c;
}
.group:last-child::after {
  display: none;
}
.body {
  display: flex;
}
.body.rows,
.rows,
.two {
  display: flex;
  flex-direction: column;
}
.two {
  padding-top: 9px;
}
.row {
  display: flex;
  align-items: center;
  justify-content: flex-start;
  height: 39px;
}
.two .row {
  height: 47px;
}
.caption {
  position: relative;
  display: flex;
  align-items: center;
  justify-content: center;
  font-size: 16px;
  color: #ddd;
  white-space: nowrap;
}
.launcher {
  position: absolute;
  left: 6px;
  top: 8px;
  width: 12px;
  height: 12px;
}
.big {
  flex-direction: column;
  justify-content: flex-start;
  padding-top: 9px;
  width: 74px;
}
.big > svg:first-child {
  margin-bottom: 7px;
}
.big span {
  display: flex;
  align-items: center;
  gap: 8px;
}
.big > .chev {
  margin-top: 6px;
}
.big:disabled {
  color: #5e5e5e;
}
.single .big {
  font-size: 18px;
}
.cell {
  width: 39px;
  height: 36px;
  color: #d0d0d0;
}
.cell.wide {
  width: 42px;
}
.drop {
  width: 21px;
}
.vline {
  width: 1px;
  height: 36px;
  background-color: #5c5c5c;
}
.vline.long {
  height: 94px;
  margin: 12px 8px 0;
}
.combo {
  display: flex;
  align-items: center;
  height: 36px;
  padding: 0 5px 0 2px;
  border: 1px solid #757575;
  border-radius: 6px;
}
.combo select {
  appearance: none;
  flex: 1;
  min-width: 0;
}
.combo .chev {
  flex: none;
}

.clipboard .big {
  width: 62px;
  margin-right: 16px;
  font-size: 19px;
}
.clipboard .rows {
  margin-right: 10px;
}
.clipboard .row {
  gap: 14px;
}
.clipboard .caption {
  padding-left: 20px;
}
.font .body {
  padding-right: 13px;
}
.align .body {
  padding-right: 12px;
}
.font .name {
  width: 180px;
}
.font .size {
  width: 63px;
  margin-right: 5px;
}
.font .name select {
  padding-left: 8px;
}
.font .chev {
  margin: 0 auto;
}
.grow,
.shrink {
  align-items: flex-end;
  flex-direction: row-reverse;
  margin-right: 8px;
  font-size: 24px;
  color: #d0d0d0;
}
.shrink {
  margin-right: 14px;
  font-size: 20px;
}
.grow .chev,
.shrink .chev {
  align-self: flex-start;
  color: #3a96dd;
}
.font .cell {
  font-size: 20px;
}
.font .cell i {
  font-family: "Liberation Serif", serif;
}
.font .font-color {
  height: 28px;
  background: linear-gradient(#e02b00, #e02b00) center bottom / 24px 6px no-repeat;
  padding-bottom: 6px;
}
.pressed {
  width: 35px;
  margin: 0 2px;
  padding-top: 6px;
  border: 1px solid #999;
  border-radius: 6px;
  background-color: #383838;
}
.lines {
  width: 22px;
  height: 14px;
  fill: none;
  stroke: #d0d0d0;
  stroke-width: 2px;
}
.lines.tall {
  height: 20px;
}
.lines.up4 {
  margin-bottom: 8px;
}
.lines .blue {
  stroke: #3a96dd;
}
.ribbon text {
  direction: ltr;
  font-size: 13px;
  fill: #d0d0d0;
}
.number .body {
  padding-right: 13px;
}
.number .format {
  width: 135px;
}
.signs {
  gap: 16px;
  padding-right: 11px;
}
.signs button {
  font-size: 26px;
  color: #d0d0d0;
}
.signs .comma {
  width: 24px;
  height: 30px;
  font-family: "Liberation Serif", serif;
  font-weight: bold;
  font-size: 48px;
  padding-bottom: 30px;
}
.decimals {
  gap: 13px;
  padding-right: 4px;
}
.item {
  padding-right: 18px;
  gap: 7px;
}
.styles .item {
  font-size: 18px;
}
.cells .item {
  gap: 6px;
}
.cells .item span {
  min-width: 54px;
  text-align: right;
}
.editing .rows {
  margin-right: 18px;
}
.editing .row {
  gap: 12px;
}
.editing .big {
  margin-right: 5px;
}
.editing .rows + .big {
  margin-right: 13px;
}
.single .body {
  justify-content: center;
}
.collapse {
  display: flex;
  align-items: flex-end;
  justify-content: flex-end;
  padding: 0 0 9px 16px;
}

/* Message bar */
.message {
  flex: none;
  height: 45px;
  margin: 0 12px;
  padding: 0 18px 0 16px;
  display: flex;
  align-items: center;
  background-color: #6c5700;
  border-radius: 0 0 10px 10px;
  white-space: nowrap;
  font-size: 18px;
}
.message strong {
  margin-right: 12px;
  font-size: 17px;
}
.message a {
  margin-right: 14px;
  text-decoration: underline;
}
.message .again,
.message .saveas {
  height: 36px;
  border: 1px solid #aaa;
  border-radius: 5px;
  background-color: #292929;
}
.message .again {
  width: 163px;
  margin-right: 26px;
}
.message .saveas {
  width: 123px;
  margin-right: 11px;
}
.message .dismiss {
  margin-right: auto;
}

/* Formula bar */
.formula {
  flex: none;
  display: flex;
  align-items: center;
  padding: 12px 12px 10px;
}
.namebox,
.fx,
.entry {
  height: 35px;
  display: flex;
  align-items: center;
  border: 1px solid #666;
  border-radius: 6px;
  background-color: #292929;
  color: #ccc;
}
.namebox {
  width: 152px;
  padding: 0 7px 0 6px;
}
.namebox input {
  flex: 1;
  min-width: 0;
  font-family: "Liberation Sans", sans-serif;
  font-size: 21px;
  color: #fff;
}
.dots {
  width: 3px;
  height: 16px;
  background: repeating-linear-gradient(#fff 0 3px, transparent 3px 6px);
}
.formula .dots {
  margin: 0 13px 0 14px;
}
.fx {
  width: 128px;
  padding: 0 3px 0 8px;
  gap: 15px;
}
.fx .off {
  color: #777;
}
.fx i {
  flex: 1;
  font-family: "Liberation Serif", serif;
  font-size: 28px;
}
.fx svg:last-child {
  margin-left: -10px;
}
.entry {
  flex: 1;
  margin-left: 6px;
  padding-right: 6px;
}
.entry input {
  flex: 1;
}

/* Sheet */
.sheet {
  flex: 1;
  min-height: 0;
  display: flex;
}
.grid {
  flex: 1;
  min-width: 0;
  overflow: hidden;
}
table {
  width: 100%;
  table-layout: fixed;
  border-collapse: separate;
  border-spacing: 0;
  font-family: "Liberation Sans", "DejaVu Sans Condensed", "DejaVu Sans", sans-serif;
  font-size: 19px;
}
col.n {
  width: 40px;
}
col.b {
  width: 96px;
}
col.c {
  width: 282px;
}
col.d {
  width: 95px;
}
th {
  height: 29px;
  padding: 0;
  font-weight: normal;
  font-size: 20px;
  line-height: 24px;
  color: #d8d8d8;
  background-color: #0a0a0a;
  border-bottom: 1px solid #444;
}
thead th {
  border-right: 1px solid #444;
  border-bottom-color: #999;
}
thead .head-a {
  padding-right: 494px;
}
thead .corner,
thead th:last-child {
  border-right: none;
}
.corner svg {
  margin: 2px 4px 0 auto;
}
.selected th {
  background-color: #636363;
  border-right: 2px solid #107c41;
}
td {
  height: 29px;
  padding: 0 3px;
  line-height: 28px;
  direction: rtl;
  text-align: right;
  white-space: nowrap;
  overflow: hidden;
  color: #000;
  background-color: #fff;
  border-right: 1px solid #dedede;
  border-bottom: 1px solid #dedede;
}
td:nth-child(2) {
  border-left: 1px solid #999;
}
td.ltr {
  direction: ltr;
  text-align: left;
  font-size: 20px;
}
.vscroll {
  width: 26px;
  margin: 0 2px 0 3px;
  padding: 7px 0;
  display: flex;
  flex-direction: column;
  align-items: center;
  background-color: #141414;
  border-radius: 13px;
}
.vscroll .thumb {
  width: 12px;
  height: 26px;
  margin-top: 8px;
  border-radius: 6px;
  background-color: #9a9a9a;
}
.vscroll .down {
  margin-top: auto;
}

/* Sheet tabs */
.sheetbar {
  flex: none;
  height: 48px;
  padding-bottom: 3px;
  display: flex;
  align-items: center;
  border-top: 1px solid #555;
}
.prev {
  margin-left: 35px;
}
.next {
  margin-left: 40px;
}
.sheet-tab {
  align-self: flex-start;
  width: 205px;
  height: 42px;
  margin: -1px 0 0 73px;
  background-color: #fff;
  border-radius: 0 0 7px 7px;
  color: #222;
  font-size: 20px;
  font-weight: 500;
}
.sheet-tab span {
  border-bottom: 3px solid #107c41;
  line-height: 32px;
}
.add {
  margin-left: 6px;
  padding-left: 63px;
  height: 28px;
  border-left: 1px solid #555;
}
.sheetbar .dots {
  margin-left: auto;
}
.hscroll {
  width: 37%;
  height: 26px;
  margin: 0 28px 0 23px;
  padding: 0 8px;
  display: flex;
  align-items: center;
  background-color: #141414;
  border-radius: 13px;
}
.track {
  flex: 1;
  padding: 0 18% 0 18%;
}
.track .thumb {
  display: block;
  height: 12px;
  border-radius: 6px;
  background-color: #9a9a9a;
}

/* Status bar */
.status {
  flex: none;
  height: 33px;
  display: flex;
  align-items: center;
  padding: 0 17px 0 14px;
  background-color: #131313;
  border-top: 1px solid #444;
  font-size: 16px;
}
.percent {
  width: 57px;
}
.status input {
  appearance: none;
  width: 148px;
  height: 18px;
  margin: 0 8px;
  background: linear-gradient(#b0b0b0, #b0b0b0) center / 100% 2px no-repeat;
}
.status input::-webkit-slider-thumb {
  appearance: none;
  width: 8px;
  height: 17px;
  background-color: #b0b0b0;
}
.views {
  align-self: stretch;
  display: flex;
  margin-left: 7px;
}
.views button {
  width: 60px;
}
.views .on {
  background-color: #232323;
}
.access {
  margin-left: auto;
  display: flex;
  gap: 29px;
}
.access button {
  gap: 5px;
}

/* Windows taskbar */
.taskbar {
  flex: none;
  height: 60px;
  display: flex;
  align-items: center;
  background: linear-gradient(90deg, #1e2535, #20232d 37%, #1e2637 48%, #20232d 58%, #1e2637 72%, #1e2536);
}
.start {
  width: 72px;
  height: 60px;
}
.task-search {
  width: 432px;
  height: 60px;
  padding-left: 16px;
  display: flex;
  align-items: center;
  gap: 18px;
  background-color: #333;
  border: 2px solid #5a5a5a;
  border-right-width: 0;
}
.task-search input {
  flex: 1;
  min-width: 0;
  font-size: 21px;
}
.task-search input::placeholder {
  color: #d8d8d8;
}
.taskview {
  width: 77px;
}
.excel-task {
  width: 73px;
  height: 60px;
  background-color: #4b505c;
  border-bottom: 3px solid #76b9ed;
}
.pager {
  width: 26px;
  height: 60px;
  margin-left: auto;
  padding: 10px 0;
  display: flex;
  flex-direction: column;
  align-items: center;
  justify-content: space-between;
  background-color: #f0f0f0;
  color: #444;
}
.weather {
  display: flex;
  align-items: center;
  gap: 12px;
  margin-left: 38px;
  font-size: 19px;
}
.tray {
  display: flex;
  align-items: center;
  gap: 14px;
  margin-left: 38px;
}
.tray svg:first-child {
  margin-right: 4px;
}
.lang {
  width: 66px;
  text-align: center;
}
.clock {
  width: 93px;
  display: flex;
  flex-direction: column;
  align-items: center;
  font-size: 17px;
  line-height: 28px;
}
.notify {
  position: relative;
  margin: 0 31px 0 23px;
}
.badge {
  position: absolute;
  left: 11px;
  top: 11px;
  width: 24px;
  height: 24px;
  border: 1px solid #999;
  border-radius: 50%;
  background-color: #333;
  font-size: 15px;
  font-weight: bold;
  line-height: 22px;
}
.desktop {
  width: 7px;
  height: 60px;
  border-left: 1px solid #777;
}

/* Overlays */
.capture {
  position: absolute;
  top: 35px;
  right: 15px;
  width: 39px;
  height: 189px;
  padding: 6px 0 10px;
  display: flex;
  flex-direction: column;
  align-items: center;
  justify-content: space-between;
  background-color: #1b1b1b;
  border-radius: 6px;
}
.activate {
  position: absolute;
  right: 78px;
  bottom: 105px;
  display: flex;
  flex-direction: column;
  font-size: 29px;
  line-height: 36px;
  color: rgba(150, 150, 150, 0.65);
}
.activate small {
  font-size: 21px;
  line-height: 32px;
}
.brand {
  position: absolute;
  left: 50%;
  bottom: 20px;
  width: 230px;
  margin-left: -115px;
  display: flex;
  flex-direction: column;
  align-items: center;
  font-weight: bold;
  color: rgba(140, 140, 140, 0.62);
}
.brand-ar {
  font-family: "DejaVu Sans", sans-serif;
  font-size: 65px;
  line-height: 72px;
}
.brand-en {
  font-family: "Liberation Sans", sans-serif;
  font-size: 38px;
  line-height: 44px;
}
```
